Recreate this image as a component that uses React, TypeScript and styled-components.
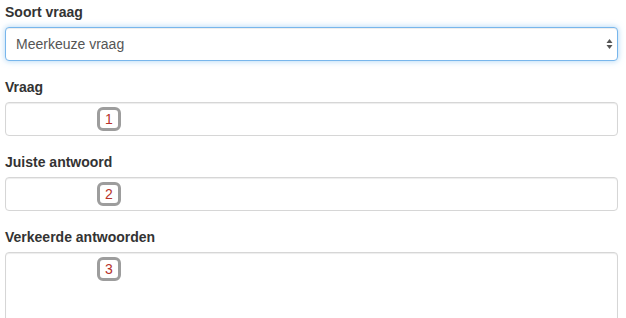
import React, {FC} from 'react';
import styled, {createGlobalStyle, css} from 'styled-components';

const GlobalStyle = createGlobalStyle`
  html, body {
    margin: 0;
    padding: 0;
    background: #fff;
  }
  body {
    font-family: "Liberation Sans", Arial, Helvetica, sans-serif;
    font-size: 14px;
    line-height: 1.42857;
    color: #333;
  }
`;

type Field = {
  label: string;
  marker: number;
  multiline?: boolean;
};

const fields: Field[] = [
  {label: 'Vraag', marker: 1},
  {label: 'Juiste antwoord', marker: 2},
  {label: 'Verkeerde antwoorden', marker: 3, multiline: true},
];

const Marker: FC<{n: number}> = ({n}) => <Badge>{n}</Badge>;

const App: FC = () => (
  <>
    <GlobalStyle />
    <Form>
      <Group>
        <Label>Soort vraag</Label>
        <SelectWrap>
          <Select defaultValue="meerkeuze">
            <option value="meerkeuze">Meerkeuze vraag</option>
            <option value="open">Open vraag</option>
          </Select>
          <Arrows width="7" height="12" viewBox="0 0 7 12">
            <path d="M3.5 1 L6.5 5 L0.5 5 Z" fill="#555" />
            <path d="M3.5 11 L6.5 7 L0.5 7 Z" fill="#555" />
          </Arrows>
        </SelectWrap>
      </Group>
      {fields.map((f) => (
        <Group key={f.label}>
          <Label>{f.label}</Label>
          <ControlWrap>
            {f.multiline ? <TextArea rows={5} /> : <Input type="text" />}
            <Marker n={f.marker} />
          </ControlWrap>
        </Group>
      ))}
    </Form>
  </>
);

const Form = styled.form`
  display: flex;
  flex-direction: column;
  gap: 16px;
  padding: 2px 8px 0 5px;
`;

const Group = styled.div`
  display: flex;
  flex-direction: column;
`;

const Label = styled.label`
  font-weight: bold;
  font-size: 14px;
  line-height: 20px;
  color: #333;
  margin-bottom: 5px;
`;

const controlBase = css`
  display: block;
  width: 100%;
  box-sizing: border-box;
  font-family: "Liberation Sans", Arial, Helvetica, sans-serif;
  font-size: 14px;
  color: #555;
  background: #fff;
  border: 1px solid #d6d6d6;
  border-radius: 4px;
  box-shadow: inset 0 1px 1px rgba(0, 0, 0, 0.075);
  outline: none;
`;

const SelectWrap = styled.div`
  position: relative;
`;

const Select = styled.select`
  ${controlBase};
  appearance: none;
  height: 34px;
  padding: 0 24px 0 10px;
  border-color: #78b6ec;
  box-shadow: inset 0 1px 1px rgba(0, 0, 0, 0.075), 0 0 6px rgba(102, 175, 233, 0.55);
`;

const Arrows = styled.svg`
  position: absolute;
  right: 5px;
  top: 11px;
  pointer-events: none;
`;

const ControlWrap = styled.div`
  position: relative;
`;

const Input = styled.input`
  ${controlBase};
  height: 34px;
  padding: 6px 12px;
`;

const TextArea = styled.textarea`
  ${controlBase};
  height: 110px;
  padding: 6px 12px;
  resize: none;
`;

const Badge = styled.span`
  position: absolute;
  left: 92px;
  top: 5px;
  width: 24px;
  height: 24px;
  box-sizing: border-box;
  display: flex;
  align-items: center;
  justify-content: center;
  border: 3px solid #9d9d9d;
  border-radius: 6px;
  background: #fff;
  color: #b8322a;
  font-size: 14px;
  line-height: 1;
`;

export default App;
